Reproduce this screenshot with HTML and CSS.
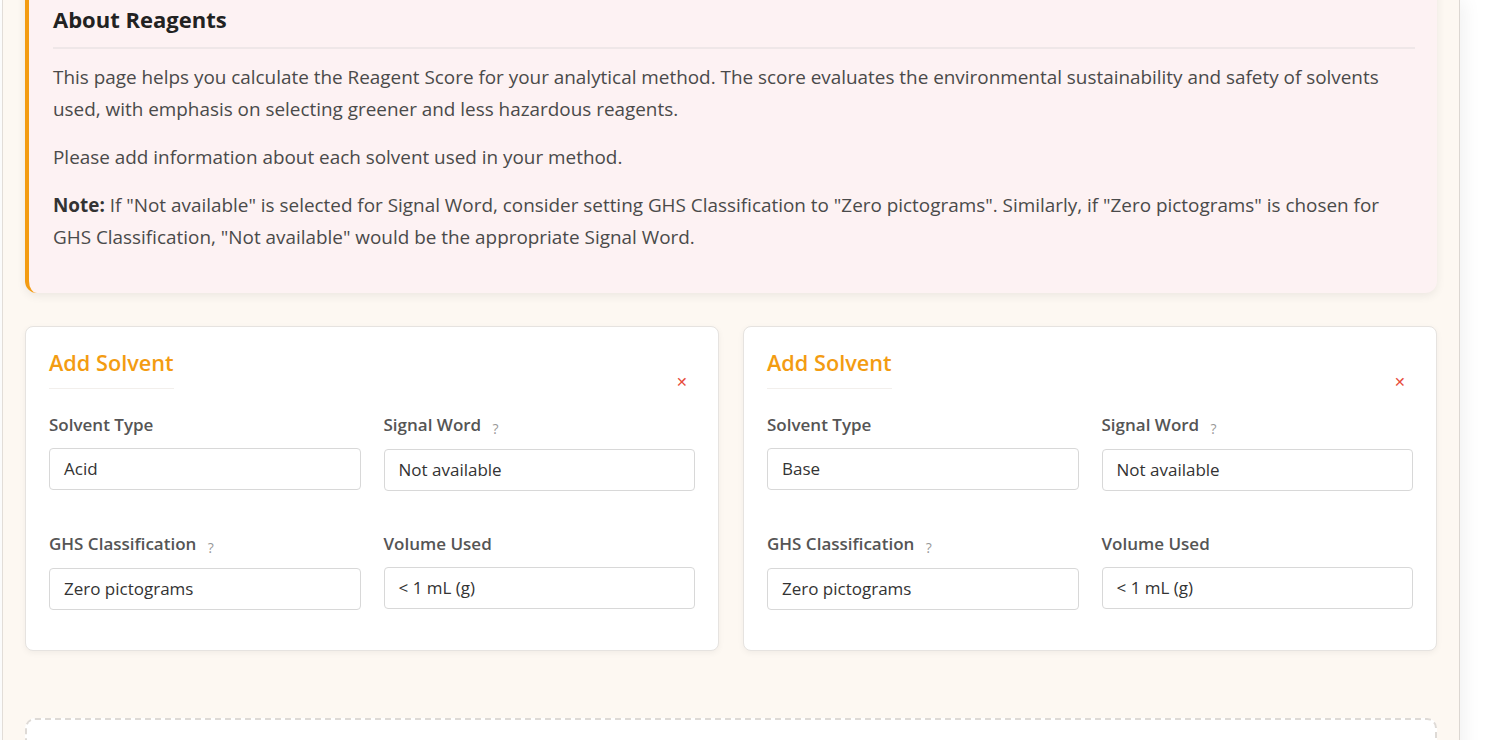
FILE: index.html
```html
<!DOCTYPE html>
<html lang="en">
<head>
<meta charset="utf-8">
<title>Reagents</title>
<link rel="stylesheet" href="styles.css">
</head>
<body>
<div class="frame">
  <main class="page">
    <section class="about">
      <h2 class="about-title">About Reagents</h2>
      <p>This page helps you calculate the Reagent Score for your analytical method. The score evaluates the environmental sustainability and safety of solvents used, with emphasis on selecting greener and less hazardous reagents.</p>
      <p>Please add information about each solvent used in your method.</p>
      <p><strong>Note:</strong> If "Not available" is selected for Signal Word, consider setting GHS Classification to "Zero pictograms". Similarly, if "Zero pictograms" is chosen for GHS Classification, "Not available" would be the appropriate Signal Word.</p>
    </section>

    <div class="cards">
      <div class="card">
        <div class="card-head">
          <h3 class="card-title">Add Solvent</h3>
          <span class="remove">&#x2715;</span>
        </div>
        <div class="fields">
          <div class="field">
            <label class="label">Solvent Type</label>
            <div class="input">Acid</div>
          </div>
          <div class="field">
            <label class="label">Signal Word <span class="help">?</span></label>
            <div class="input">Not available</div>
          </div>
          <div class="field">
            <label class="label">GHS Classification <span class="help">?</span></label>
            <div class="input">Zero pictograms</div>
          </div>
          <div class="field">
            <label class="label">Volume Used</label>
            <div class="input">&lt; 1 mL (g)</div>
          </div>
        </div>
      </div>

      <div class="card">
        <div class="card-head">
          <h3 class="card-title">Add Solvent</h3>
          <span class="remove">&#x2715;</span>
        </div>
        <div class="fields">
          <div class="field">
            <label class="label">Solvent Type</label>
            <div class="input">Base</div>
          </div>
          <div class="field">
            <label class="label">Signal Word <span class="help">?</span></label>
            <div class="input">Not available</div>
          </div>
          <div class="field">
            <label class="label">GHS Classification <span class="help">?</span></label>
            <div class="input">Zero pictograms</div>
          </div>
          <div class="field">
            <label class="label">Volume Used</label>
            <div class="input">&lt; 1 mL (g)</div>
          </div>
        </div>
      </div>
    </div>

    <div class="add-box"></div>
  </main>
</div>
</body>
</html>
```

FILE: styles.css
```css
* { box-sizing: border-box; }

html, body {
  margin: 0;
  padding: 0;
  background: #ffffff;
  overflow: hidden;
  height: 740px;
}

body {
  font-family: "Open Sans", "Noto Sans", sans-serif;
  color: #444;
}

.frame {
  display: flow-root;
  width: 1458px;
  margin-left: 2px;
  min-height: 800px;
  background: #fdf8f2;
  border-left: 1px solid #e2ddd8;
  border-right: 1px solid #dcd7d2;
  box-shadow: 4px 0 18px rgba(0, 0, 0, 0.06);
}

.page {
  padding: 0 22px 0 22px;
  margin-top: -20px;
}

.about {
  background: #fdf2f3;
  border-left: 4px solid #f39c12;
  border-radius: 12px;
  padding: 24px 22px 24px 24px;
  box-shadow: 0 3px 10px rgba(0, 0, 0, 0.07);
}

.about-title {
  margin: 0 0 12px 0;
  padding-bottom: 13px;
  border-bottom: 2px solid #efe7e8;
  font-size: 22px;
  font-weight: 700;
  color: #222;
  line-height: 30px;
}

.about p {
  margin: 0 0 16px 0;
  font-size: 18.9px;
  line-height: 32px;
  color: #4a4a4a;
}

.about strong { color: #333; }

.cards {
  display: grid;
  grid-template-columns: 1fr 1fr;
  gap: 24px;
  margin-top: 33px;
}

.card {
  background: #fff;
  border: 1px solid #e6e3e0;
  border-radius: 8px;
  padding: 22px 23px 40px 23px;
  box-shadow: 0 2px 6px rgba(0, 0, 0, 0.05);
}

.card-head {
  display: flex;
  justify-content: space-between;
  align-items: flex-end;
}

.card-title {
  margin: 0;
  font-size: 21.7px;
  font-weight: 600;
  color: #f39c12;
  line-height: 28px;
  padding-bottom: 11px;
  border-bottom: 1px solid #f2efec;
}

.remove {
  color: #e74c3c;
  font-size: 14px;
  line-height: 14px;
  margin-right: 7px;
  margin-bottom: 0;
}

.fields {
  display: grid;
  grid-template-columns: 1fr 1fr;
  column-gap: 23px;
  row-gap: 41px;
  margin-top: 24px;
}

.field {
  display: flex;
  flex-direction: column;
}

.label {
  font-size: 17px;
  font-weight: 600;
  color: #555;
  line-height: 24px;
  margin-bottom: 11px;
}

.help {
  font-size: 14px;
  font-weight: 400;
  color: #999;
  margin-left: 7px;
  position: relative;
  top: 3px;
}

.input {
  height: 42px;
  border: 1px solid #d8d8d8;
  border-radius: 4px;
  padding: 0 14px 2px 14px;
  display: flex;
  align-items: center;
  font-size: 17px;
  color: #333;
  background: #fff;
}

.add-box {
  margin-top: 67px;
  height: 80px;
  border: 2px dashed #dedad6;
  border-radius: 10px;
  background: #fff;
}
```
